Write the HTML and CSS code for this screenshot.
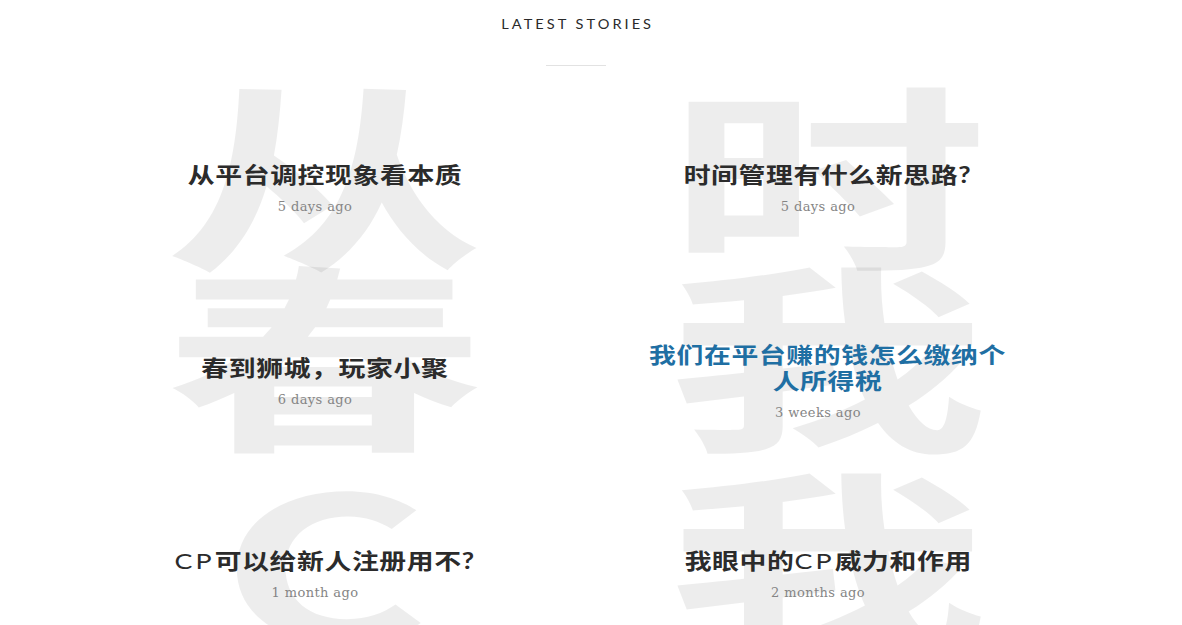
FILE: index.html
```html
<!DOCTYPE html>
<html lang="zh-CN">
<head>
<meta charset="utf-8">
<title>Latest Stories</title>
<link rel="stylesheet" href="styles.css">
</head>
<body>
<div class="page">
  <header class="section-head">
    <h2 class="section-title">LATEST STORIES</h2>
    <span class="section-rule"></span>
  </header>
  <div class="stories">
    <article class="story">
      <span class="story-bg">从</span>
      <h3 class="story-title">从平台调控现象看本质</h3>
      <time class="story-date">5 days ago</time>
    </article>
    <article class="story">
      <span class="story-bg">时</span>
      <h3 class="story-title">时间管理有什么新思路?</h3>
      <time class="story-date">5 days ago</time>
    </article>
    <article class="story">
      <span class="story-bg">春</span>
      <h3 class="story-title">春到狮城，玩家小聚</h3>
      <time class="story-date">6 days ago</time>
    </article>
    <article class="story story-active">
      <span class="story-bg">我</span>
      <h3 class="story-title">我们在平台赚的钱怎么缴纳个人所得税</h3>
      <time class="story-date">3 weeks ago</time>
    </article>
    <article class="story">
      <span class="story-bg">C</span>
      <h3 class="story-title"><span class="latin">CP</span>可以给新人注册用不?</h3>
      <time class="story-date">1 month ago</time>
    </article>
    <article class="story">
      <span class="story-bg">我</span>
      <h3 class="story-title">我眼中的<span class="latin">CP</span>威力和作用</h3>
      <time class="story-date">2 months ago</time>
    </article>
  </div>
</div>
</body>
</html>
```
FILE: styles.css
```css
html, body {
  margin: 0;
  padding: 0;
  background: #fff;
  overflow: hidden;
}
body {
  font-family: Lato, "Noto Sans CJK SC", sans-serif;
  color: #333;
}
.page {
  width: 1152px;
}
.section-head {
  display: flex;
  flex-direction: column;
  align-items: center;
  padding-top: 16px;
}
.section-title {
  margin: 0;
  font-size: 13.5px;
  line-height: 16px;
  letter-spacing: 2.8px;
  padding-left: 2.8px;
  font-weight: 400;
  color: #2a2a2a;
  transform: scaleX(1.08);
}
.section-rule {
  display: block;
  width: 60px;
  height: 1px;
  margin-top: 33px;
  background: #e2e2e2;
}
.stories {
  display: grid;
  grid-template-columns: 503px 503px;
  padding: 0 73px;
  margin-top: 34px;
}
.story {
  position: relative;
  display: flex;
  flex-direction: column;
  align-items: center;
  justify-content: center;
  padding: 62px 0 63px;
}
.story-bg {
  position: absolute;
  top: -31px;
  left: 0;
  right: 0;
  text-align: center;
  font-family: "Noto Sans CJK SC", sans-serif;
  font-size: 200px;
  line-height: 1;
  font-weight: 700;
  color: rgba(0, 0, 0, 0.07);
  transform: scaleX(1.6);
  pointer-events: none;
  z-index: 0;
}
.story-title {
  position: relative;
  z-index: 1;
  margin: 0;
  max-width: 300px;
  padding-left: 0.5px;
  text-align: center;
  font-family: Lato, "Noto Sans CJK SC", sans-serif;
  font-size: 22px;
  line-height: 26px;
  letter-spacing: 0.5px;
  font-weight: 700;
  color: #2b2b2b;
  transform: scaleX(1.22);
}
.latin {
  font-weight: 400;
  letter-spacing: 2.5px;
}
.story-active .story-title {
  color: #1f6fa3;
}
.story-date {
  position: relative;
  z-index: 1;
  margin-top: 9px;
  margin-right: 19px;
  font-family: "DejaVu Serif", serif;
  font-size: 13px;
  line-height: 20px;
  letter-spacing: 0.4px;
  color: #858585;
}
```
